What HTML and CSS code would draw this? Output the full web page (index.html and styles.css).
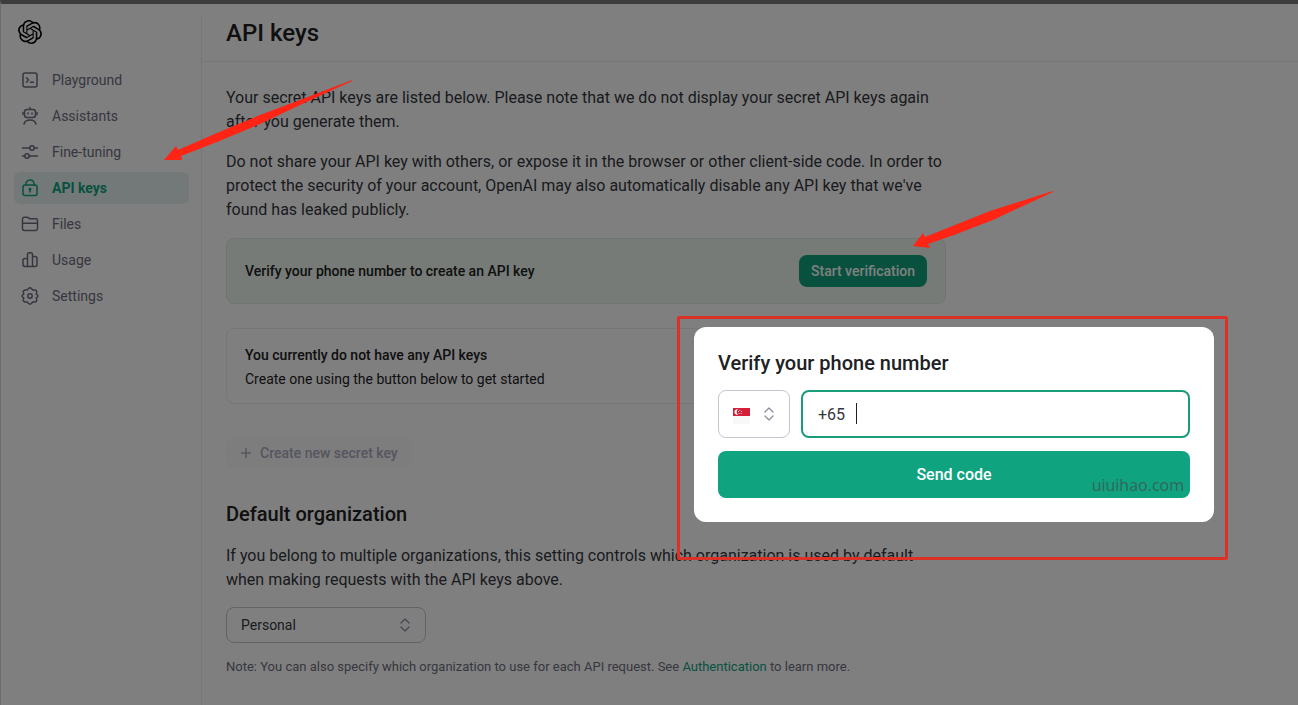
FILE: index.html
```html
<!DOCTYPE html>
<html lang="en">
<head>
  <meta charset="UTF-8">
  <title>API keys</title>
  <meta name="viewport" content="width=device-width, initial-scale=1.0">
  <link rel="stylesheet" href="styles.css">
</head>
<body>
  <div class="page">
    <aside class="sidebar">
      <a href="#" class="logo" aria-label="OpenAI">
        <svg width="24" height="24" viewBox="0 0 24 24" fill="currentColor"><path d="M22.2819 9.8211a5.9847 5.9847 0 0 0-.5157-4.9108 6.0462 6.0462 0 0 0-6.5098-2.9A6.0651 6.0651 0 0 0 4.9807 4.1818a5.9847 5.9847 0 0 0-3.9977 2.9 6.0462 6.0462 0 0 0 .7427 7.0966 5.98 5.98 0 0 0 .511 4.9107 6.051 6.051 0 0 0 6.5146 2.9001A5.9847 5.9847 0 0 0 13.2599 24a6.0557 6.0557 0 0 0 5.7718-4.2058 5.9894 5.9894 0 0 0 3.9977-2.9001 6.0557 6.0557 0 0 0-.7475-7.0729zm-9.022 12.6081a4.4755 4.4755 0 0 1-2.8764-1.0408l.1419-.0804 4.7783-2.7582a.7948.7948 0 0 0 .3927-.6813v-6.7369l2.02 1.1686a.071.071 0 0 1 .038.052v5.5826a4.504 4.504 0 0 1-4.4945 4.4944zm-9.6607-4.1254a4.4708 4.4708 0 0 1-.5346-3.0137l.142.0852 4.783 2.7582a.7712.7712 0 0 0 .7806 0l5.8428-3.3685v2.3324a.0804.0804 0 0 1-.0332.0615L9.74 19.9502a4.4992 4.4992 0 0 1-6.1408-1.6464zM2.3408 7.8956a4.485 4.485 0 0 1 2.3655-1.9728V11.6a.7664.7664 0 0 0 .3879.6765l5.8144 3.3543-2.0201 1.1685a.0757.0757 0 0 1-.071 0l-4.8303-2.7865A4.504 4.504 0 0 1 2.3408 7.872zm16.5963 3.8558L13.1038 8.364 15.1192 7.2a.0757.0757 0 0 1 .071 0l4.8303 2.7913a4.4944 4.4944 0 0 1-.6765 8.1042v-5.6772a.79.79 0 0 0-.407-.667zm2.0107-3.0231l-.142-.0852-4.7735-2.7818a.7759.7759 0 0 0-.7854 0L9.409 9.2297V6.8974a.0662.0662 0 0 1 .0284-.0615l4.8303-2.7866a4.4992 4.4992 0 0 1 6.6802 4.66zM8.3065 12.863l-2.02-1.1638a.0804.0804 0 0 1-.038-.0567V6.0742a4.4992 4.4992 0 0 1 7.3757-3.4537l-.142.0805L8.704 5.459a.7948.7948 0 0 0-.3927.6813zm1.0976-2.3654l2.602-1.4998 2.6069 1.4998v2.9994l-2.5974 1.4997-2.6067-1.4997Z"/></svg>
      </a>
      <nav class="nav">
        <a href="#" class="nav-item">
          <svg class="icon" viewBox="0 0 18 18"><rect x="2" y="2" width="14" height="14" rx="2"/><path d="M5.500 6.800l2 2.200-2 2.200M9.500 11.200h3"/></svg>
          Playground
        </a>
        <a href="#" class="nav-item">
          <svg class="icon" viewBox="0 0 18 18"><rect x="3.500" y="2.500" width="11" height="8" rx="2.500"/><path d="M9 .6v1.900M2 5.500v2M16 5.500v2M7 6v1M11 6v1M3 17c.6-2.700 2.900-4 6-4s5.400 1.300 6 4"/></svg>
          Assistants
        </a>
        <a href="#" class="nav-item">
          <svg class="icon" viewBox="0 0 18 18"><circle cx="11" cy="5" r="2.200"/><circle cx="6" cy="13" r="2.200"/><path d="M1.500 5h7.300M13.200 5h3.300M1.500 13h2.300M8.200 13h8.300"/></svg>
          Fine-tuning
        </a>
        <a href="#" class="nav-item active">
          <svg class="icon" viewBox="0 0 18 18"><rect x="2" y="6" width="14" height="10.500" rx="2"/><path d="M4.800 6c0-3.200 1.700-4.900 4.200-4.900s4.200 1.700 4.200 4.900M9 10.500v2.500"/><circle cx="9" cy="10.300" r=".7"/></svg>
          API keys
        </a>
        <a href="#" class="nav-item">
          <svg class="icon" viewBox="0 0 18 18"><path d="M1.500 4c0-1.100.7-1.700 1.700-1.700h3c.7 0 1.200.3 1.700.8l.6.7h6.300c1.100 0 1.700.7 1.700 1.700v8.300c0 1.100-.6 1.700-1.700 1.700H3.200c-1.100 0-1.700-.6-1.700-1.700zM1.500 8.200h15"/></svg>
          Files
        </a>
        <a href="#" class="nav-item">
          <svg class="icon" viewBox="0 0 18 18"><path d="M6.500 15.500V3.700c0-1.100.7-1.900 1.700-1.900h1.600c1 0 1.700.8 1.700 1.900v11.800M6.500 7.500H4c-1.100 0-2 .8-2 1.900v4.200c0 1.100.9 1.900 2 1.900h10c1.100 0 2-.8 2-1.900V7.400c0-1.100-.9-1.900-2-1.900h-2.500"/></svg>
          Usage
        </a>
        <a href="#" class="nav-item">
          <svg class="icon" viewBox="0 0 18 18"><path d="M7.400 1.700Q9 0 10.600 1.700L11.800 3 13.600 2.900Q16 3.200 15.700 5.500L15.200 7 16.400 8Q17.400 9 16.400 10L15.200 11 15.700 12.500Q16 14.800 13.600 15.100L11.800 15 10.600 16.300Q9 18 7.400 16.300L6.200 15 4.400 15.100Q2 14.800 2.300 12.500L2.800 11 1.600 10Q.6 9 1.600 8L2.800 7 2.300 5.500Q2 3.200 4.400 2.900L6.200 3z"/><circle cx="9" cy="9" r="2.200"/></svg>
          Settings
        </a>
      </nav>
    </aside>

    <main class="main">
      <header class="page-header">
        <h1>API keys</h1>
      </header>

      <div class="content">
        <p>Your secret API keys are listed below. Please note that we do not display your secret API keys again after you generate them.</p>
        <p>Do not share your API key with others, or expose it in the browser or other client-side code. In order to protect the security of your account, OpenAI may also automatically disable any API key that we've found has leaked publicly.</p>

        <div class="banner">
          <strong>Verify your phone number to create an API key</strong>
          <button type="button" class="btn btn-primary">Start verification</button>
        </div>

        <div class="empty-box">
          <strong>You currently do not have any API keys</strong>
          <span>Create one using the button below to get started</span>
        </div>

        <button type="button" class="btn btn-disabled" disabled>
          <svg width="12" height="12" viewBox="0 0 12 12"><path d="M6 1v10M1 6h10"/></svg>
          Create new secret key
        </button>

        <h2>Default organization</h2>
        <p class="org-text">If you belong to multiple organizations, this setting controls which organization is used by default when making requests with the API keys above.</p>

        <div class="select-wrap org-select">
          <select aria-label="Default organization">
            <option>Personal</option>
          </select>
          <svg class="chevrons" viewBox="0 0 12 14"><path d="M2 5l4-4 4 4M2 9l4 4 4-4"/></svg>
        </div>

        <p class="note">Note: You can also specify which organization to use for each API request. See <a href="#">Authentication</a> to learn more.</p>
      </div>
    </main>
  </div>

  <div class="backdrop"></div>

  <!-- highlight frame around the dialog -->
  <div class="frame">
    <form class="modal" role="dialog" aria-labelledby="modalTitle">
      <h2 id="modalTitle">Verify your phone number</h2>
      <div class="phone-row">
        <div class="select-wrap country-select">
          <select aria-label="Country">
            <option value="SG" aria-label="Singapore"></option>
          </select>
          <svg class="flag" viewBox="0 0 17 16"><path fill="#f8f8f9" d="M0 8h17v8H0z"/><path fill="#d51f38" d="M0 0h17v8H0z"/><path fill="#fff" d="M5 1.300a2.800 2.800 0 1 0 0 5.400 3.300 3.300 0 0 1 0-5.400z"/><g fill="#fff"><circle cx="7" cy="2.300" r=".5"/><circle cx="8.700" cy="3.600" r=".5"/><circle cx="8.100" cy="5.500" r=".5"/><circle cx="6" cy="5.500" r=".5"/><circle cx="5.500" cy="3.600" r=".5"/></g></svg>
          <svg class="chevrons" viewBox="0 0 12 14"><path d="M2 5l4-4 4 4M2 9l4 4 4-4"/></svg>
        </div>
        <div class="phone-field">
          <input type="tel" value="+65" aria-label="Phone number">
          <span class="caret"></span>
        </div>
      </div>
      <button type="submit" class="btn-send">Send code</button>
      <span class="watermark">uiuihao.com</span>
    </form>
  </div>

  <!-- pointer arrows -->
  <svg class="arrow arrow-nav" viewBox="0 0 190 82"><path d="M0 80L12 66l2 4L53 53 96 35 136 20 188 0v1L136 25 96 44 53 62 17 76l1 4z"/></svg>
  <svg class="arrow arrow-verify" viewBox="0 0 142 58"><path d="M0 55L10 42l2 4L77 20 140 0v1L80 29 41 44 15 53l2 4z"/></svg>
</body>
</html>
```
FILE: styles.css
```css
* {
  box-sizing: border-box;
}

body {
  margin: 0;
  position: relative;
  min-height: 100vh;
  overflow: hidden;
  font-family: Roboto, "Liberation Sans", Arial, sans-serif;
  font-size: 16px;
  line-height: 24px;
  color: #353740;
  background: #fff;
}

h1, h2, p {
  margin: 0;
}

h1, h2, strong {
  font-weight: 500;
}

button, select, input {
  font-family: inherit;
}

.page {
  display: flex;
  min-height: 100vh;
  border-top: 4px solid #7a7a7a;
  border-left: 1px solid #d8d8d8;
}

/* sidebar */
.sidebar {
  width: 201px;
  flex-shrink: 0;
  margin-top: 12px;
  padding: 4px 12px 0 13px;
  border-right: 1px solid #ececf1;
}

.logo {
  display: block;
  width: 24px;
  height: 24px;
  margin: 0 0 20px 4px;
  color: #000;
}

.logo svg {
  display: block;
}

.nav {
  display: flex;
  flex-direction: column;
  gap: 4px;
}

.nav-item {
  display: flex;
  align-items: center;
  gap: 13px;
  height: 32px;
  padding: 0 7px;
  border-radius: 6px;
  font-size: 14px;
  color: #6e6e80;
  text-decoration: none;
}

.nav-item.active {
  background: #e6f3f0;
  color: #10a37f;
  font-weight: bold;
}

.icon {
  width: 18px;
  height: 18px;
  fill: none;
  stroke: currentColor;
  stroke-width: 1.5;
  stroke-linecap: round;
  stroke-linejoin: round;
}

/* main column */
.main {
  flex: 1;
}

.page-header {
  height: 58px;
  padding: 0 24px;
  display: flex;
  align-items: center;
  border-bottom: 1px solid #ececf1;
}

h1 {
  font-size: 24px;
  line-height: 28px;
  color: #202123;
}

.content {
  max-width: 768px;
  padding: 24px;
}

.content p {
  margin-bottom: 16px;
}

.banner {
  display: flex;
  align-items: center;
  justify-content: space-between;
  height: 66px;
  padding: 0 18px;
  border: 1px solid #dcece0;
  border-radius: 8px;
  background: #edf7ef;
  font-size: 14px;
  color: #202123;
}

.btn {
  display: inline-flex;
  align-items: center;
  height: 32px;
  padding: 0 12px;
  border: none;
  border-radius: 8px;
  font-size: 14px;
  font-weight: 500;
}

.btn-primary {
  background: #10a37f;
  color: #fff;
}

.empty-box {
  display: flex;
  flex-direction: column;
  margin-top: 24px;
  padding: 14px 18px 12px;
  border: 1px solid #ececf1;
  border-radius: 8px;
  font-size: 14px;
  color: #202123;
}

.btn-disabled {
  gap: 8px;
  margin: 33px 0;
  padding: 0 14px;
  background: #fafafa;
  color: #acacbe;
}

.btn-disabled svg {
  fill: none;
  stroke: currentColor;
  stroke-width: 1.5;
}

h2 {
  font-size: 20px;
  line-height: 24px;
  color: #202123;
}

.content .org-text {
  margin: 18px 0 15px;
}

.select-wrap {
  position: relative;
}

.select-wrap select {
  display: block;
  width: 100%;
  height: 100%;
  padding: 0 14px;
  border: 1px solid #c5c5d2;
  border-radius: 8px;
  background: transparent;
  appearance: none;
  font-size: 14px;
  color: #353740;
}

.chevrons {
  position: absolute;
  top: 50%;
  right: 15px;
  width: 12px;
  height: 14px;
  margin-top: -7px;
  fill: none;
  stroke: #8e8ea0;
  stroke-width: 1.3;
  stroke-linecap: round;
  stroke-linejoin: round;
  pointer-events: none;
}

.org-select {
  width: 200px;
  height: 36px;
}

.content .note {
  margin: 12px 0 0;
  font-size: 13px;
  color: #6e6e80;
}

.note a {
  color: #10a37f;
  text-decoration: none;
}

.backdrop {
  position: absolute;
  inset: 0;
  background: rgba(0, 0, 0, 0.5);
}

/* dialog */
.frame {
  position: absolute;
  top: 316px;
  right: 70px;
  width: 551px;
  padding: 8px 11px 35px 14px;
  border: 3px solid #dc3126;
  border-radius: 2px;
}

.modal {
  position: relative;
  display: flex;
  flex-direction: column;
  padding: 24px;
  border-radius: 12px;
  background: #fff;
}

.phone-row {
  display: flex;
  gap: 11px;
  margin: 15px 0 13px;
}

.country-select {
  width: 72px;
  height: 48px;
}

.flag {
  position: absolute;
  top: 18px;
  left: 15px;
  width: 17px;
  height: 16px;
  pointer-events: none;
}

.phone-field {
  position: relative;
  flex: 1;
}

.phone-field input {
  display: block;
  width: 100%;
  height: 48px;
  padding: 0 15px;
  border: 2px solid #1a9b7a;
  border-radius: 8px;
  background: #fff;
  font-size: 16px;
  color: #353740;
  outline: none;
}

.caret {
  position: absolute;
  top: 13px;
  left: 55px;
  width: 1px;
  height: 21px;
  background: #202123;
}

.btn-send {
  height: 47px;
  border: none;
  border-radius: 8px;
  background: #10a37f;
  color: #fff;
  font-size: 16px;
  font-weight: 500;
}

.watermark {
  position: absolute;
  right: 30px;
  bottom: 25px;
  font-family: "Open Sans", sans-serif;
  font-size: 16px;
  color: #35655a;
}

.arrow {
  position: absolute;
  fill: #ff2414;
  pointer-events: none;
}

.arrow-nav {
  top: 80px;
  left: 164px;
  width: 190px;
  height: 82px;
}

.arrow-verify {
  top: 191px;
  left: 913px;
  width: 142px;
  height: 58px;
}
```
